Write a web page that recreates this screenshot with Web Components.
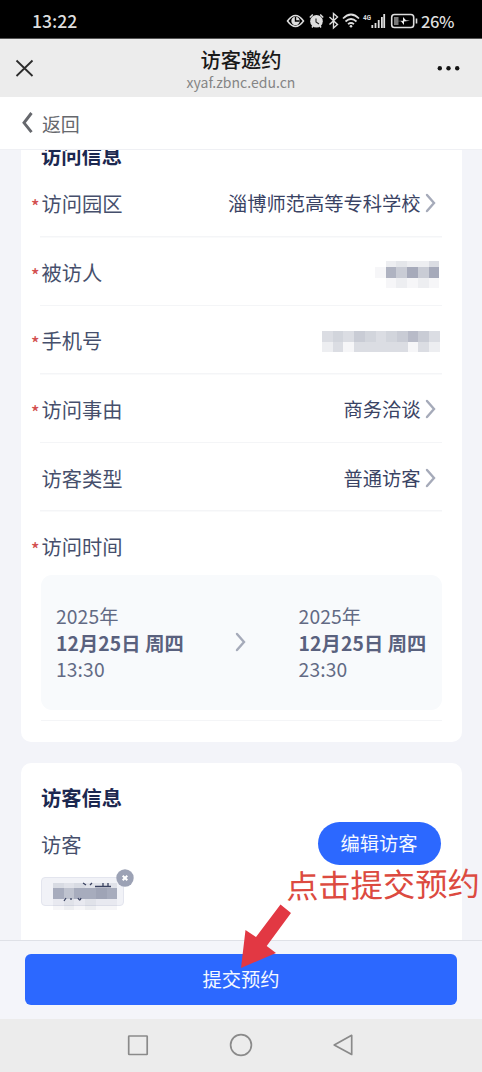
<!DOCTYPE html>
<html lang="zh-CN">
<head>
<meta charset="utf-8">
<title>访客邀约</title>
<style>
html,body{margin:0;padding:0;height:1072px;overflow:hidden;background:#f3f4f9}
body{font-family:"Noto Sans CJK SC","Noto Sans",sans-serif}
</style>
</head>
<body>
<visitor-app></visitor-app>
<script>
const define = (name, html) => customElements.define(name, class extends HTMLElement {
  constructor() {
    super();
    const t = document.createElement('template');
    t.innerHTML = html;
    this.attachShadow({mode: 'open'}).appendChild(t.content.cloneNode(true));
  }
});

define('status-bar', `<style>
:host{display:flex;box-sizing:border-box;height:39px;background:#000;border-bottom:1px solid #555;color:#dedede;font:500 17.6px/38px "Noto Sans CJK SC",sans-serif;padding:2px 0 0 32px;justify-content:space-between}
span{display:block;height:36px}
.r{display:flex;padding-right:29px}
.p{font-size:16.5px;letter-spacing:-.4px;width:32px}
svg{display:block}
</style><span>13:22</span><div class="r">
<svg width="135" height="36" viewBox="286 2 135 36" fill="none" stroke="#dedede">
<path d="M287.500 21q8-11 16 0q-8 11-16 0Z" stroke-width="1.500"/><circle cx="295.500" cy="21" r="4.200" fill="#dedede" stroke="none"/><path d="M295.500 17v4h4" stroke="#000" stroke-width="1.400"/>
<circle cx="316.500" cy="21.300" r="6.300" fill="#dedede" stroke="none"/><path d="M309.800 17.500l3-3M323.200 17.500l-3-3M312 27.500l1-1.500M321 27.500l-1-1.500" stroke-width="1.500"/><path d="M316 18.500v3.500l3 2" stroke="#222" stroke-width="1.100"/>
<path d="M329.500 17l8 7.500-4 3.500V13.500l4 3.500-8 7.500" stroke-width="1.400"/>
<path d="M343 18.500q8-8 16 0M345.500 21.500q5.500-5 11 0M348 24.200q3-2.400 6 0" stroke-width="1.700"/><circle cx="351" cy="26.300" r="1.300" fill="#dedede" stroke="none"/>
<path d="M372.300 28v-3M375.500 28v-5M378.700 28v-8M381.900 28V17M384.200 28V14" stroke-width="1.800"/>
<rect x="391.700" y="14.500" width="22" height="13" rx="2.800" stroke-width="1.600"/><path d="M394 17h4.500v8H394z" fill="#777" stroke="none"/><path d="M397 21l6-.3V17l3 3.200 4 .6-6 .6v3.500l-3-3.600z" fill="#eee" stroke="none"/><path d="M416.500 18.500v5" stroke-width="1.600"/>
<text x="363" y="19.500" font-family="Roboto" font-size="7.500" font-weight="700" fill="#dedede" stroke="none" textLength="8" lengthAdjust="spacingAndGlyphs">4G</text>
</svg><span class="p">26%</span></div>`);

define('web-header', `<style>
:host{display:grid;grid-template-columns:60px 1fr 60px;align-items:center;height:58px;background:#ececec}
.t{text-align:center;height:58px}
b{display:block;font-weight:500;font-size:20.300px;line-height:28px;padding-top:6px;color:#191919}
small{display:block;font-size:14px;line-height:18px;margin-top:0;color:#858585;font-family:"Noto Sans CJK SC";letter-spacing:.02px}
svg{display:block}
</style><svg width="60" height="58"><path d="M16.500 21.500l16 15.500M32.500 21.500l-16 15.500" stroke="#2c2c2c" stroke-width="1.800"/></svg>
<div class="t"><b>访客邀约</b><small>xyaf.zbnc.edu.cn</small></div>
<svg width="60" height="58" fill="#151515"><circle cx="17.800" cy="29.300" r="2.200"/><circle cx="26.500" cy="29.300" r="2.200"/><circle cx="35.200" cy="29.300" r="2.200"/></svg>`);

define('back-bar', `<style>
:host{display:flex;box-sizing:border-box;height:53px;background:#fff;border-bottom:1px solid #eff0f4;padding-left:20px;font-size:19px;line-height:54px;color:#66686d;letter-spacing:-.2px}
svg{display:block;margin-right:8px}
</style><svg width="14" height="52"><path d="M11.500 16L4 25.800l7.500 9.400" fill="none" stroke="#66686d" stroke-width="2.900"/></svg><span>返回</span>`);

define('chevron-icon', `<style>:host{display:block;flex:none}svg{display:block}</style>
<svg width="12" height="20" viewBox="0 0 12 20"><path d="M2 2l7 8-7 8" fill="none" stroke="#a5aab9" stroke-width="2.400" stroke-linecap="round"/></svg>`);

define('form-card', `<style>
:host{display:block;box-sizing:border-box;background:#fff;border-radius:10px;padding:0 20px 0 20.500px;flex:none}
h2{margin:0;font-size:20.300px;line-height:28px;font-weight:700;color:#1c2850}
</style><h2><slot name="title"></slot></h2><slot></slot>`);

define('form-row', `<style>
:host{display:flex;box-sizing:border-box;height:68.600px;align-items:center;justify-content:space-between;margin-left:-10px;background:linear-gradient(#f4f5f7,#f4f5f7) right bottom/calc(100% - 9px) 1.500px no-repeat}
.l{display:flex;height:28px;font-size:20.300px;line-height:28px;color:#464f6c}
i{display:block;width:10.500px;font:normal 500 17.500px/33px "Noto Sans CJK SC";color:#d34f50}
:host([optional]) i{visibility:hidden}
.v{display:flex;align-items:center;font-size:19.250px;line-height:28px;color:#3a4364}
</style><div class="l"><i>*</i><slot name="label"></slot></div><div class="v"><slot></slot></div>`);

define('time-range', `<style>
:host{display:flex;box-sizing:border-box;height:135px;border-radius:11px;background:#f8fafc;padding:0 15px;align-items:center;justify-content:space-between;font-size:19.250px;line-height:26.700px;letter-spacing:.12px;color:#626a84}
p{margin:0;white-space:nowrap;padding-top:1px}b{display:block;color:#59617e}
</style><p>2025年<b>12月25日 周四</b>13:30</p><chevron-icon></chevron-icon><p>2025年<b>12月25日 周四</b>23:30</p>`);

/* Pixelated block for private values: rows of opacities, one digit per cell. */
customElements.define('pixel-mask', class extends HTMLElement {
  constructor() {
    super();
    const root = this.attachShadow({mode: 'open'});
    const c = this.getAttribute('cell') || 10.7;
    const hs = this.getAttribute('heights').split(' ').map(Number);
    let y = 0, out = '', w = 0;
    this.getAttribute('rows').split(' ').forEach((r, j) => {
      w = Math.max(w, r.length * c);
      [...r].forEach((d, i) => { if (d !== '0') out += '<rect x="' + i * c + '" y="' + y + '" width="' + c + '" height="' + hs[j] + '" fill-opacity="' + parseInt(d, 16) / 20 + '"/>'; });
      y += hs[j];
    });
    root.innerHTML = '<style>:host{display:block}svg{display:block}</style><svg shape-rendering="crispEdges" width="' + w + '" height="' + y + '" fill="#4d5675">' + out + '</svg>';
  }
});

define('visitor-tag', `<style>
:host{display:block;position:relative;width:83px;height:29px;box-sizing:border-box;border:1.500px solid #e3e5ee;border-radius:4px;background:#f1f2f7;margin-top:12px}
pixel-mask{position:absolute;left:11px;top:5px}
.x{position:absolute;left:73.500px;top:-9px}
.s{position:absolute;left:0;top:0}
</style><pixel-mask cell="10.700" heights="5 10.500 11" rows="323222 9699a9 121211"></pixel-mask>
<svg class="s" width="82" height="28" fill="none" stroke="#3a4261" stroke-width="1.300"><path d="M41 5l3 2M48 7l2-2M53 8.500h16M61 5v4M66 5v4M24 20l-2 3M29 20v2M36 20q2 4 3 0"/></svg>
<svg class="x" width="18" height="18"><circle cx="9" cy="9" r="8.700" fill="#9ca2b5"/><path d="M6.700 6.700l4.600 4.600m0-4.600l-4.600 4.600" stroke="#fff" stroke-width="2"/></svg>`);

define('pill-button', `<style>
:host{display:block;width:123px;height:43px;border-radius:22px;background:#2c68ff;color:#f4f8ff;font-size:19.250px;line-height:43px;text-align:center;margin-right:1px}
</style><slot></slot>`);

define('submit-bar', `<style>
:host{display:block;box-sizing:border-box;height:79px;background:#f4f5fa;border-top:1.500px solid #dfe1e7;padding:13px 25px 0}
div{height:51px;border-radius:6px;background:#2c68ff;color:#f4f8ff;font-size:19.250px;line-height:50px;text-align:center}
</style><div><slot></slot></div>`);

define('system-nav', `<style>
:host{display:block;height:53px;background:#ececec}svg{display:block}
</style><svg width="482" height="53" fill="none" stroke="#8a8a8a" stroke-width="1.700" stroke-linejoin="round"><rect x="128.700" y="17" width="18.500" height="18.500" rx=".5"/><circle cx="241" cy="26" r="10.400"/><path d="M351.700 16.300v19.200L334.200 26z"/></svg>`);

define('callout-note', `<style>
:host{display:block;position:absolute;left:0;top:860px;width:482px;height:115px}
span{position:absolute;left:285.500px;top:0;font-size:32.300px;line-height:46px;color:#dc4a40;white-space:nowrap;transform:rotate(-.9deg)}
svg{position:absolute;left:0;top:0}
</style><svg width="482" height="115"><path d="M280.500 44.500L291 53l-24.300 33 9.300 7-35 15 4.500-38 10.500 7z" fill="#e23843"/></svg><span>点击提交预约</span>`);

define('visitor-app', `<style>
:host{display:flex;flex-direction:column;position:relative;width:482px;height:1072px;overflow:hidden;background:#f3f4f9}
main{flex:1;min-height:0;overflow:hidden;padding:0 20.500px;display:flex;flex-direction:column;gap:21px}
.visit{height:609px;margin-top:-17px}
.visit>[slot=title]{display:block;padding-top:8px;height:28px}
time-range{margin:-5.600px 0 0}
.end{height:1.500px;background:#f4f5f7;margin-top:10px}
.guest{height:190px}
.guest>[slot=title]{display:block;padding-top:20px}
.g{display:flex;justify-content:space-between;align-items:center;height:43px;margin-top:11px;font-size:20.300px;color:#464f6c}
form-row chevron-icon{margin-left:4px;margin-right:5px}
</style>
<status-bar></status-bar><web-header></web-header><back-bar></back-bar>
<main>
<form-card class="visit"><span slot="title">访问信息</span>
<form-row><span slot="label">访问园区</span>淄博师范高等专科学校<chevron-icon></chevron-icon></form-row>
<form-row><span slot="label">被访人</span><pixel-mask style="margin:5px 2px 0 0" heights="6 10.500 11" rows="023224 196a6a 012121"></pixel-mask></form-row>
<form-row><span slot="label">手机号</span><pixel-mask style="margin:3px 2px 0 0" heights="10.700 10.700" rows="45465456864 24144444142"></pixel-mask></form-row>
<form-row><span slot="label">访问事由</span>商务洽谈<chevron-icon></chevron-icon></form-row>
<form-row optional><span slot="label">访客类型</span>普通访客<chevron-icon></chevron-icon></form-row>
<form-row style="background:none"><span slot="label">访问时间</span></form-row>
<time-range></time-range><div class="end"></div>
</form-card>
<form-card class="guest"><span slot="title">访客信息</span>
<div class="g"><span>访客</span><pill-button>编辑访客</pill-button></div>
<visitor-tag></visitor-tag>
</form-card>
</main>
<submit-bar>提交预约</submit-bar><system-nav></system-nav>
<callout-note></callout-note>`);
</script>
</body>
</html>
